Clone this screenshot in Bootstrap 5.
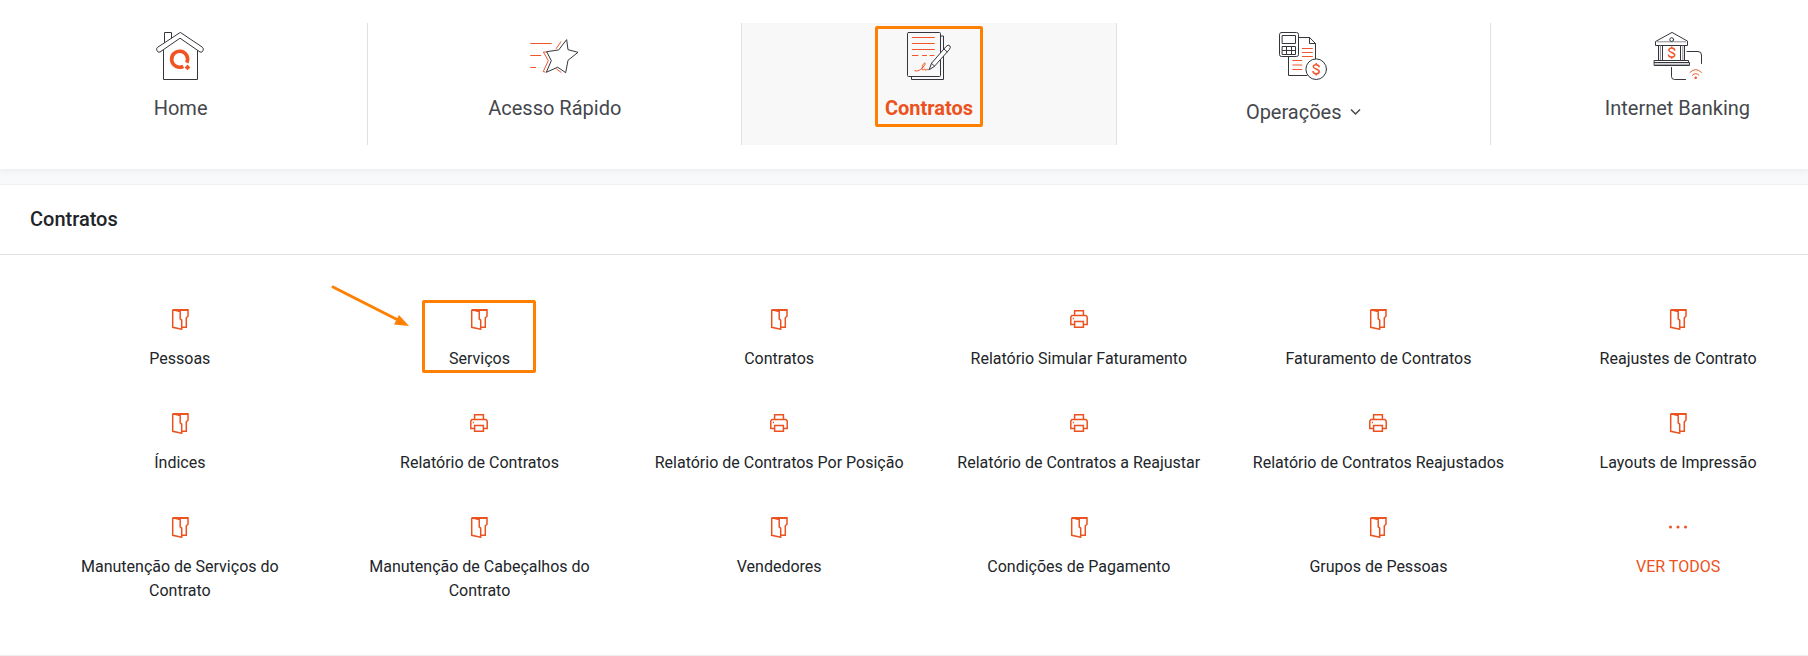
<!DOCTYPE html>
<html lang="pt-BR">
<head>
<meta charset="utf-8">
<meta name="viewport" content="width=device-width, initial-scale=1">
<title>Contratos</title>
<link href="https://cdn.jsdelivr.net/npm/bootstrap@5.3.0/dist/css/bootstrap.min.css" rel="stylesheet">
<style>
  :root { --brand: #eb5220; --mark: #ff8000; --ink: #212529; --rule: #dee0e1; }
  body { font-family: Roboto, "Liberation Sans", sans-serif; font-size: 16px; line-height: 24px; color: var(--ink); background: #f8f9fb; overflow-x: hidden; }
  .topbar { padding: 23px 0 24px; box-shadow: 0 2px 6px rgba(30, 40, 50, .06); overflow: hidden; }
  /* the menu strip runs past both window edges */
  .menu-strip { margin: 0 -56px 0 -6px; }
  .menu-cell { height: 122px; padding-top: 9px; border-right: 1px solid var(--rule); }
  .menu-cell:last-child { border-right: 0; }
  .menu-cell.current { background: #f8f8f8; }
  .menu-link { display: flex; flex-direction: column; align-items: center; gap: 16px; font-size: 20px; color: #44474d; text-decoration: none; background: none; border: 0; padding: 0; }
  .menu-link.with-sub { gap: 20px; }
  .current .menu-link { color: var(--brand); font-weight: 700; }
  .menu-link svg.pic { width: 49px; height: 48px; }
  svg { fill: none; display: block; }
  .dk { stroke: #34363c; stroke-width: 1; stroke-linejoin: round; stroke-linecap: round; }
  .og { stroke: #f0562a; stroke-width: 1; stroke-linecap: round; stroke-linejoin: round; }
  .hl { position: relative; }
  .hl::after { content: ""; position: absolute; border: 3px solid var(--mark); border-radius: 2px; left: 50%; transform: translateX(-50%); pointer-events: none; }
  .hl-menu::after { width: 108px; height: 101px; top: -6px; }
  .hl-tile::after { width: 114px; height: 73px; top: -8px; }
  .pointer { position: absolute; right: calc(50% + 69px); top: -24px; }
  .panel { margin-top: 15px; border-top: 1px solid #f1f2f3; border-bottom: 1px solid #eceeef; }
  .panel-title { font-size: 20px; font-weight: 500; line-height: 24px; padding: 22px 30px 23px; border-bottom: 1px solid var(--rule); }
  .tiles { padding: 53px 0 52px; margin: 0 -20px 0 30px; row-gap: 41px; }
  .tile { display: flex; flex-direction: column; align-items: center; gap: 17px; padding: 0 22px; text-align: center; color: var(--ink); text-decoration: none; }
  .tile svg.ico { width: 18px; height: 22px; stroke: var(--brand); stroke-width: 1.5; }
  .tile.more { color: var(--brand); }
</style>
</head>
<body>
<svg width="0" height="0" class="position-absolute" aria-hidden="true">
  <symbol id="folder" viewBox="0 0 18 22">
    <path d="M1.7 1.7V19.3L10.7 21.2V12.2L9.2 10.8V3.5L1.7 1.7H17V8.2L15.3 9.8V19.3H11"/><path d="M2 2.2H17"/>
  </symbol>
  <symbol id="printer" viewBox="0 0 18 22">
    <path d="M4.6 7.6V2.7H13.4V7.6M4.4 16.5H.8V9L2 7.6H16L17.2 9V16.5H13.6M4.6 13.6H13.4V19.3H4.6Z"/><path d="M2.8 10.5H4"/>
  </symbol>
  <symbol id="dots" viewBox="0 0 18 22">
    <g fill="#eb5220" stroke="none"><circle cx="1.5" cy="11" r="1.5"/><circle cx="9" cy="11" r="1.5"/><circle cx="16.5" cy="11" r="1.5"/></g>
  </symbol>
</svg>

<header class="topbar bg-white">
  <nav class="menu-strip" aria-label="Principal">
    <ul class="row g-0 flex-nowrap list-unstyled mb-0">
      <li class="col menu-cell">
        <a href="#" class="menu-link">
          <svg class="pic" viewBox="0 0 49 48" aria-hidden="true">
            <path class="dk" d="M8.5 10.5V.5H15.5V6M24 .6 1.3 15.5Q0 16.7 1 18.5 2 21 4 20L24 6.2 44 20Q46 21 47 18.5 48 16.7 46.7 15.5ZM7.5 18.5V47.5H41.5V18.5"/>
            <path d="M27.3 34.3A8 8 0 1 1 30.8 30.7" stroke="#f05423" stroke-width="3.6"/>
            <path d="M31.5 32.6 34.3 35.4 31.5 38.2 28.7 35.4Z" fill="#f05423"/>
          </svg>
          <span>Home</span>
        </a>
      </li>
      <li class="col menu-cell">
        <a href="#" class="menu-link">
          <svg class="pic" viewBox="0 0 49 48" aria-hidden="true">
            <path class="og" d="M.6 11.5H21.3M.6 23.5H10.8M.6 35.5H5.6M26.3 16.5 30.8 9.8M16.5 20H13.4L18.3 28.7 13.2 39.6 15 40M26.5 37 31 40.3"/>
            <path class="dk" d="M36.7 8 38 17.7 48 20.3 38 28.3 35.7 40.7 27.7 35.2 16.3 40.3 21.3 28.7 16.7 19.7 28.3 18Z"/>
          </svg>
          <span>Acesso Rápido</span>
        </a>
      </li>
      <li class="col menu-cell current">
        <a href="#" class="menu-link hl hl-menu" aria-current="page">
          <svg class="pic" viewBox="0 0 49 48" aria-hidden="true">
            <path class="dk" d="M35.5 4H38.5V47.5H6.5V44.6"/>
            <rect class="dk" x="2.5" y=".5" width="33" height="44" rx="1"/>
            <path class="og" d="M7.3 5.5H29.4M7.3 11.5H29.4M7.3 17.5H29.4M7.3 23.5H13M17.5 23.5H21.5M25 23.5H29M9.8 38.8C14 40 18 36 20 32.5 21 30.5 19 30.5 18 32.8 16.8 36 16.6 38.8 18.5 37.8 20 36.5 20.5 37 20.2 38.2 22 38 22 36.8 23.5 37.6"/>
            <path class="dk" fill="#fff" d="M24.3 37.4 26.5 31.3 40.8 14.8Q43.3 11.8 45 14 46 15.5 44.2 17.7L29.5 34.2ZM26.5 31.3 29.5 34.2M39 17 42 19.8"/>
          </svg>
          <span>Contratos</span>
        </a>
      </li>
      <li class="col menu-cell">
        <button type="button" class="menu-link with-sub w-100" aria-haspopup="true">
          <svg class="pic" viewBox="0 0 49 48" aria-hidden="true">
            <path class="dk" d="M19.5 5.5H30.6L36.5 11.5V27M30.5 5.5V11.5H36.5M9.5 24.5V43.5H28"/>
            <path class="og" d="M23.4 16.5H33.4M23.4 20.5H33.4M23.4 24.5H33.4M13.8 28.5H22.8M13.8 33H22.8M13.8 37.5H22.8"/>
            <rect class="dk" x=".5" y=".5" width="19" height="24" rx="2"/>
            <rect class="dk" x="3.5" y="3.5" width="13" height="8"/>
            <path class="dk" d="M3.5 14.5H16.5V22.5H3.5ZM3.5 18.5H16.5M7.5 14.5V22.5M12.5 14.5V22.5"/>
            <circle class="dk" cx="37.2" cy="37.2" r="10.3" fill="#fff"/>
            <path d="M40.2 35.2C40 31.8 34.2 32 34.3 34.8 34.5 37.4 40.2 36.7 40.2 39.6 40 42.6 34 42.4 34 39M37.2 31V33M37.2 41.7V43.6" stroke="#f0562a" stroke-width="1.5"/>
          </svg>
          <span class="d-flex align-items-center gap-2">Operações
            <svg width="11" height="8" viewBox="0 0 11 8" aria-hidden="true"><path d="M1 1.5 5.5 6 10 1.5" stroke="#44474d" stroke-width="1.5"/></svg>
          </span>
        </button>
      </li>
      <li class="col menu-cell">
        <a href="#" class="menu-link">
          <svg class="pic" viewBox="0 0 49 48" aria-hidden="true">
            <path class="dk" d="M18.7 .6 2.5 9.5V13.5H34.5V9.5ZM5.5 13.5V28.5H9.5V13.5M27.5 13.5V28.5H31.5V13.5M1.5 28.5H35.5V30.5H1.5ZM1.5 30.5H36.5V33.5H1.5ZM34 19.5H45Q48.5 19.5 48.5 23V31.5M18.5 35.5V44.5Q18.5 47.5 21.5 47.5H32.5"/>
            <path d="M4 9.8H33M7.4 13.4V28M29.8 13.4V28M1.4 32.2H36.2" stroke="#8a8c90"/>
            <circle class="dk" cx="18.7" cy="7.6" r="1.9"/>
            <path d="M21.7 18.6C21.5 15.2 15.7 15.4 15.8 18.2 16 20.8 21.7 20.1 21.7 23 21.5 26 15.5 25.8 15.5 22.4M18.7 14.6V16.4M18.7 25V26.8" stroke="#f0562a" stroke-width="1.5"/>
            <path class="og" d="M37 40.4Q42.7 34.6 48.4 40.4M39.4 43.2Q42.7 39.8 46 43.2"/>
            <circle cx="42.7" cy="45.8" r="1.3" fill="#f0562a"/>
          </svg>
          <span>Internet Banking</span>
        </a>
      </li>
    </ul>
  </nav>
</header>

<main class="panel bg-white">
  <h1 class="panel-title mb-0">Contratos</h1>
  <div class="row row-cols-2 row-cols-md-3 row-cols-lg-6 gx-0 tiles">
    <div class="col"><a href="#" class="tile"><svg class="ico"><use href="#folder"/></svg><span>Pessoas</span></a></div>
    <div class="col"><a href="#" class="tile hl hl-tile"><svg class="ico"><use href="#folder"/></svg><span>Serviços</span>
      <svg class="pointer" width="80" height="46" viewBox="0 0 80 46" aria-hidden="true"><path d="M3 3 68 36" stroke="#ff8000" stroke-width="3" stroke-linecap="round"/><path d="M79 42 64 40.5 69 31Z" fill="#ff8000"/></svg></a></div>
    <div class="col"><a href="#" class="tile"><svg class="ico"><use href="#folder"/></svg><span>Contratos</span></a></div>
    <div class="col"><a href="#" class="tile"><svg class="ico"><use href="#printer"/></svg><span>Relatório Simular Faturamento</span></a></div>
    <div class="col"><a href="#" class="tile"><svg class="ico"><use href="#folder"/></svg><span>Faturamento de Contratos</span></a></div>
    <div class="col"><a href="#" class="tile"><svg class="ico"><use href="#folder"/></svg><span>Reajustes de Contrato</span></a></div>
    <div class="col"><a href="#" class="tile"><svg class="ico"><use href="#folder"/></svg><span>Índices</span></a></div>
    <div class="col"><a href="#" class="tile"><svg class="ico"><use href="#printer"/></svg><span>Relatório de Contratos</span></a></div>
    <div class="col"><a href="#" class="tile"><svg class="ico"><use href="#printer"/></svg><span>Relatório de Contratos Por Posição</span></a></div>
    <div class="col"><a href="#" class="tile"><svg class="ico"><use href="#printer"/></svg><span>Relatório de Contratos a Reajustar</span></a></div>
    <div class="col"><a href="#" class="tile"><svg class="ico"><use href="#printer"/></svg><span>Relatório de Contratos Reajustados</span></a></div>
    <div class="col"><a href="#" class="tile"><svg class="ico"><use href="#folder"/></svg><span>Layouts de Impressão</span></a></div>
    <div class="col"><a href="#" class="tile"><svg class="ico"><use href="#folder"/></svg><span>Manutenção de Serviços do Contrato</span></a></div>
    <div class="col"><a href="#" class="tile"><svg class="ico"><use href="#folder"/></svg><span>Manutenção de Cabeçalhos do Contrato</span></a></div>
    <div class="col"><a href="#" class="tile"><svg class="ico"><use href="#folder"/></svg><span>Vendedores</span></a></div>
    <div class="col"><a href="#" class="tile"><svg class="ico"><use href="#folder"/></svg><span>Condições de Pagamento</span></a></div>
    <div class="col"><a href="#" class="tile"><svg class="ico"><use href="#folder"/></svg><span>Grupos de Pessoas</span></a></div>
    <div class="col"><a href="#" class="tile more"><svg class="ico"><use href="#dots"/></svg><span>VER TODOS</span></a></div>
  </div>
</main>
<script src="https://cdn.jsdelivr.net/npm/bootstrap@5.3.0/dist/js/bootstrap.bundle.min.js"></script>
</body>
</html>
